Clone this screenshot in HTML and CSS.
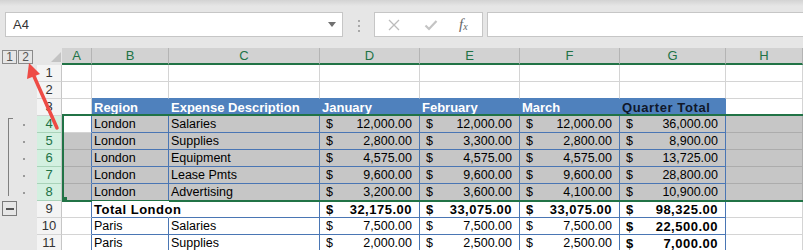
FILE: index.html
```html
<!DOCTYPE html>
<html lang="en">
<head>
  <meta charset="UTF-8" />
  <title>Group rows</title>
  <link rel="stylesheet" href="styles.css">
</head>
<body>
  <div class="app">
    <div class="fbar">
      <div class="namebox">
        <span class="ref">A4</span>
        <span class="drop"></span>
      </div>
      <div class="grip"><i></i><i></i><i></i></div>
      <div class="fbtns">
        <svg class="ico" width="12" height="12" viewBox="0 0 12 12"><path d="M1 1L11 11M11 1L1 11" stroke="#bcbcbc" stroke-width="1.3" fill="none"/></svg>
        <svg class="ico" width="14" height="12" viewBox="0 0 14 12"><path d="M1.5 6.5L5 10L12.5 2" stroke="#c4c4c4" stroke-width="2.2" fill="none"/></svg>
        <span class="fx">f<sub>x</sub></span>
      </div>
      <div class="finput"></div>
    </div>

    <div class="sheet">
      <!-- column headers -->
      <div class="ol levels"><span>1</span><span>2</span></div>
      <div class="corner"><span class="tri"></span></div>
      <div class="ch">A</div><div class="ch">B</div><div class="ch">C</div><div class="ch">D</div>
      <div class="ch">E</div><div class="ch">F</div><div class="ch">G</div><div class="ch">H</div>

      <!-- row 1 -->
      <div class="ol"></div><div class="rh">1</div>
      <div class="c"></div><div class="c"></div><div class="c"></div><div class="c"></div>
      <div class="c"></div><div class="c"></div><div class="c"></div><div class="c"></div>

      <!-- row 2 -->
      <div class="ol"></div><div class="rh">2</div>
      <div class="c"></div><div class="c top"></div><div class="c top"></div><div class="c top"></div>
      <div class="c top"></div><div class="c top"></div><div class="c top"></div><div class="c"></div>

      <!-- row 3 -->
      <div class="ol"></div><div class="rh">3</div>
      <div class="c"></div>
      <div class="c hd">Region</div>
      <div class="c hd">Expense Description</div>
      <div class="c hd">January</div>
      <div class="c hd">February</div>
      <div class="c hd">March</div>
      <div class="c hd dark">Quarter Total</div>
      <div class="c"></div>

      <!-- row 4 -->
      <div class="ol grp first"><i class="dot"></i></div><div class="rh on">4</div>
      <div class="c edge"></div>
      <div class="c tb sl">London</div><div class="c tb sl">Salaries</div>
      <div class="c tb sl n"><span>$</span><span>12,000.00</span></div>
      <div class="c tb sl n"><span>$</span><span>12,000.00</span></div>
      <div class="c tb sl n"><span>$</span><span>12,000.00</span></div>
      <div class="c tb sl n"><span>$</span><span>36,000.00</span></div>
      <div class="c sl"></div>

      <!-- row 5 -->
      <div class="ol grp"><i class="dot"></i></div><div class="rh on">5</div>
      <div class="c edge sl"></div>
      <div class="c tb sl">London</div><div class="c tb sl">Supplies</div>
      <div class="c tb sl n"><span>$</span><span>2,800.00</span></div>
      <div class="c tb sl n"><span>$</span><span>3,300.00</span></div>
      <div class="c tb sl n"><span>$</span><span>2,800.00</span></div>
      <div class="c tb sl n"><span>$</span><span>8,900.00</span></div>
      <div class="c sl"></div>

      <!-- row 6 -->
      <div class="ol grp"><i class="dot"></i></div><div class="rh on">6</div>
      <div class="c edge sl"></div>
      <div class="c tb sl">London</div><div class="c tb sl">Equipment</div>
      <div class="c tb sl n"><span>$</span><span>4,575.00</span></div>
      <div class="c tb sl n"><span>$</span><span>4,575.00</span></div>
      <div class="c tb sl n"><span>$</span><span>4,575.00</span></div>
      <div class="c tb sl n"><span>$</span><span>13,725.00</span></div>
      <div class="c sl"></div>

      <!-- row 7 -->
      <div class="ol grp"><i class="dot"></i></div><div class="rh on">7</div>
      <div class="c edge sl"></div>
      <div class="c tb sl">London</div><div class="c tb sl">Lease Pmts</div>
      <div class="c tb sl n"><span>$</span><span>9,600.00</span></div>
      <div class="c tb sl n"><span>$</span><span>9,600.00</span></div>
      <div class="c tb sl n"><span>$</span><span>9,600.00</span></div>
      <div class="c tb sl n"><span>$</span><span>28,800.00</span></div>
      <div class="c sl"></div>

      <!-- row 8 -->
      <div class="ol grp last"><i class="dot"></i></div><div class="rh on">8</div>
      <div class="c edge sl"></div>
      <div class="c tb sl">London</div><div class="c tb sl">Advertising</div>
      <div class="c tb sl n"><span>$</span><span>3,200.00</span></div>
      <div class="c tb sl n"><span>$</span><span>3,600.00</span></div>
      <div class="c tb sl n"><span>$</span><span>4,100.00</span></div>
      <div class="c tb sl n"><span>$</span><span>10,900.00</span></div>
      <div class="c sl"></div>

      <!-- row 9 -->
      <div class="ol"><span class="minus"></span></div><div class="rh">9</div>
      <div class="c edge"></div>
      <div class="c tb bd spill">Total London</div><div class="c tb"></div>
      <div class="c tb n bd"><span>$</span><span>32,175.00</span></div>
      <div class="c tb n bd"><span>$</span><span>33,075.00</span></div>
      <div class="c tb n bd"><span>$</span><span>33,075.00</span></div>
      <div class="c tb n bd"><span>$</span><span>98,325.00</span></div>
      <div class="c"></div>

      <!-- row 10 -->
      <div class="ol"></div><div class="rh">10</div>
      <div class="c edge"></div>
      <div class="c tb">Paris</div><div class="c tb">Salaries</div>
      <div class="c tb n"><span>$</span><span>7,500.00</span></div>
      <div class="c tb n"><span>$</span><span>7,500.00</span></div>
      <div class="c tb n"><span>$</span><span>7,500.00</span></div>
      <div class="c tb n bd"><span>$</span><span>22,500.00</span></div>
      <div class="c"></div>

      <!-- row 11 -->
      <div class="ol"></div><div class="rh">11</div>
      <div class="c edge"></div>
      <div class="c tb">Paris</div><div class="c tb">Supplies</div>
      <div class="c tb n"><span>$</span><span>2,000.00</span></div>
      <div class="c tb n"><span>$</span><span>2,500.00</span></div>
      <div class="c tb n"><span>$</span><span>2,500.00</span></div>
      <div class="c tb n bd"><span>$</span><span>7,000.00</span></div>
      <div class="c"></div>

      <div class="selection"></div>
      <div class="handle"></div>
    </div>

    <svg class="arrow" width="803" height="250" viewBox="0 0 803 250">
      <line x1="57" y1="128" x2="33" y2="74" stroke="#ee4b45" stroke-width="3.5" stroke-linecap="round"/>
      <polygon points="29,63 40,74 27,79" fill="#ee4b45"/>
    </svg>
  </div>
</body>
</html>
```

FILE: styles.css
```css
:root {
  --panel: #e6e6e6;
  --grid: #d4d4d4;
  --blue: #4f81bd;
  --blue-line: #4a76b4;
  --green: #217346;
  --sel: #c6c6c6;
}
* {
  box-sizing: border-box;
}
body {
  margin: 0;
  font-family: "Liberation Sans", Arial, sans-serif;
}
.app {
  position: relative;
  width: 803px;
  height: 250px;
  overflow: hidden;
  background: var(--panel);
}

/* formula bar */
.fbar {
  display: flex;
  align-items: flex-start;
  height: 48px;
  padding: 12px 0 0 5px;
  background: linear-gradient(#d3d3d3 0, #e6e6e6 6px, #e6e6e6 100%);
}
.namebox {
  display: flex;
  align-items: center;
  justify-content: space-between;
  width: 338px;
  height: 25px;
  padding: 0 6px 0 7px;
  background: #fff;
  border: 1px solid #c6c6c6;
}
.ref {
  font-size: 13px;
  color: #333;
}
.drop {
  width: 0;
  height: 0;
  border-left: 4px solid transparent;
  border-right: 4px solid transparent;
  border-top: 5px solid #707070;
}
.grip {
  display: flex;
  flex-direction: column;
  align-items: center;
  gap: 3px;
  width: 31px;
  padding-top: 8px;
}
.grip i {
  display: block;
  width: 2px;
  height: 2px;
  background: #a8a8a8;
}
.fbtns {
  display: flex;
  align-items: center;
  width: 109px;
  height: 25px;
  padding-left: 13px;
  background: #fff;
  border: 1px solid #c6c6c6;
}
.ico {
  margin-right: 24px;
}
.ico + .ico {
  margin-right: 21px;
}
.fx {
  font-family: "Liberation Serif", serif;
  font-style: italic;
  font-size: 15px;
  color: #666;
}
.fx sub {
  font-size: 10px;
  vertical-align: -1px;
}
.finput {
  flex: 1;
  height: 25px;
  margin-left: 4px;
  background: #fff;
  border: 1px solid #c6c6c6;
  border-right: none;
}

/* sheet grid */
.sheet {
  position: relative;
  display: grid;
  grid-template-columns: 37px 25px 30px 77px 151px 100px 100px 100px 106px 1fr;
  grid-auto-rows: 17px;
}
.ol {
  background: var(--panel);
}
.levels {
  display: flex;
  gap: 1px;
  padding: 2px 0 0 2px;
}
.levels span {
  width: 15px;
  height: 14px;
  border: 1px solid #8a8a8a;
  font-size: 12px;
  line-height: 12px;
  text-align: center;
  color: #555;
}
.corner {
  display: flex;
  justify-content: flex-end;
  align-items: flex-end;
  padding: 0 1px 3px 0;
  background: var(--panel);
}
.tri {
  width: 0;
  height: 0;
  border-left: 10px solid transparent;
  border-bottom: 10px solid #c3c3c3;
}
.ch {
  background: #d2d2d2;
  border-right: 1px solid #b4b4b4;
  border-bottom: 2px solid var(--green);
  color: var(--green);
  font-size: 13px;
  line-height: 15px;
  text-align: center;
}
.rh {
  background: #f4f4f4;
  border-right: 1px solid #c6c6c6;
  border-bottom: 1px solid var(--grid);
  font-size: 13px;
  line-height: 16px;
  text-align: center;
  color: #333;
}
.rh.on {
  background: #d3f0e0;
  border-bottom-color: #a9d3b9;
  color: var(--green);
}

/* outline group */
.grp {
  display: flex;
  align-items: center;
  background:
    linear-gradient(#808080, #808080) 8px 0 / 1px 100% no-repeat,
    var(--panel);
}
.grp.first {
  background:
    linear-gradient(#808080, #808080) 8px 2px / 1px 100% no-repeat,
    linear-gradient(#808080, #808080) 8px 2px / 5px 1px no-repeat,
    var(--panel);
}
.grp.last {
  background:
    linear-gradient(#808080, #808080) 8px 0 / 1px 12px no-repeat,
    var(--panel);
}
.dot {
  display: block;
  width: 2px;
  height: 2px;
  margin-left: 23px;
  background: #9a9a9a;
}
.minus {
  display: flex;
  align-items: center;
  justify-content: center;
  width: 15px;
  height: 15px;
  margin-left: 2px;
  border: 1px solid #7a7a7a;
}
.minus::before {
  content: "";
  width: 8px;
  height: 2px;
  background: #555;
}

/* cells */
.c {
  background: #fff;
  border-right: 1px solid var(--grid);
  border-bottom: 1px solid var(--grid);
  padding: 1px 0 0 2px;
  font-size: 12.5px;
  line-height: 15px;
  color: #000;
  white-space: nowrap;
}
.c.top {
  border-bottom-color: var(--blue);
}
.c.edge {
  border-right-color: var(--blue-line);
}
.c.sl {
  background: var(--sel);
  border-bottom-color: #acacac;
  border-right-color: #acacac;
}
.c.edge.sl {
  border-right-color: var(--blue-line);
}
.c.tb {
  border-right-color: var(--blue-line);
  border-bottom-color: var(--blue-line);
}
.c.hd {
  background: var(--blue);
  border-color: var(--blue);
  color: #fff;
  font-weight: bold;
  font-size: 13px;
}
.c.hd.dark {
  color: #10182a;
  letter-spacing: 0.6px;
}
.n {
  display: flex;
  justify-content: space-between;
  padding: 1px 7px 0 6px;
}
.bd {
  font-weight: bold;
  font-size: 13px;
  letter-spacing: 0.5px;
}
.c.spill {
  position: relative;
  z-index: 1;
  overflow: visible;
  border-right-color: #fff;
}

/* selection overlay */
.selection {
  position: absolute;
  left: 62px;
  top: 66px;
  right: -10px;
  height: 88px;
  border: 2px solid var(--green);
  border-right: none;
  pointer-events: none;
}
.handle {
  position: absolute;
  left: 62px;
  top: 149px;
  width: 5px;
  height: 5px;
  background: var(--green);
}
.arrow {
  position: absolute;
  left: 0;
  top: 0;
  pointer-events: none;
}
```
